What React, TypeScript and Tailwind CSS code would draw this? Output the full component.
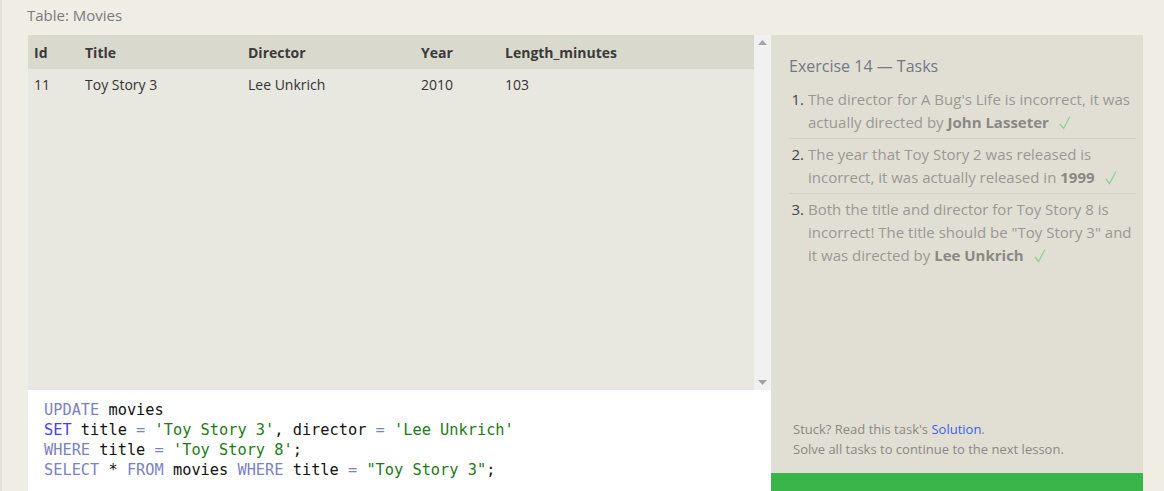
import React from 'react';

const cols = [
  { key: 'Id', w: 'w-[51px]' },
  { key: 'Title', w: 'w-[163px]' },
  { key: 'Director', w: 'w-[173px]' },
  { key: 'Year', w: 'w-[84px]' },
  { key: 'Length_minutes', w: 'w-[150px]' },
];

const row = ['11', 'Toy Story 3', 'Lee Unkrich', '2010', '103'];

function Check() {
  return (
    <svg width="12" height="15" viewBox="0 0 12 15" className="ml-[10px] inline-block align-[-2px]">
      <path d="M1 9 L4.5 13.5 L11 1.5" fill="none" stroke="#8fd09a" strokeWidth="1.3" />
    </svg>
  );
}

export default function App() {
  return (
    <div className="h-[491px] w-[1164px] overflow-hidden border-l-2 border-[#e2e0d8] bg-[#f0ede5] font-['Open_Sans',sans-serif]">
      <div className="pl-[25px] pt-[4px] text-[15px] leading-[22px] text-[#7a7a7a]">Table: Movies</div>
      <div className="mt-[9px] flex pl-[26px]">
        {/* left column: result table + editor */}
        <div className="flex w-[743px] flex-col">
          <div className="flex h-[355px]">
            <div className="flex-1 bg-[#e9e8e0] text-[14px] text-[#333]">
              <div className="flex h-[34px] items-center bg-[#dad9cd] pl-[6px] font-bold text-[#3a3a3a]">
                {cols.map((c) => (
                  <div key={c.key} className={c.w}>
                    {c.key}
                  </div>
                ))}
              </div>
              <div className="flex h-[31px] items-center pl-[6px]">
                {row.map((v, i) => (
                  <div key={i} className={cols[i].w}>
                    {v}
                  </div>
                ))}
              </div>
            </div>
            <div className="flex w-[17px] flex-col items-center justify-between bg-[#f1f1f1] py-[5px]">
              <svg width="9" height="5" viewBox="0 0 9 5">
                <path d="M0 5 L4.5 0 L9 5 Z" fill="#a3a3a3" />
              </svg>
              <svg width="9" height="5" viewBox="0 0 9 5">
                <path d="M0 0 L4.5 5 L9 0 Z" fill="#a3a3a3" />
              </svg>
            </div>
          </div>
          <div className="h-[110px] bg-white pl-[16px] pt-[10px] font-['DejaVu_Sans_Mono',monospace] text-[15.3px] leading-[20px] whitespace-pre text-[#111]">
            <div>
              <span className="text-[#7b82c4]">UPDATE</span> movies
            </div>
            <div>
              <span className="text-[#4a3ff0]">SET</span> title <span className="text-[#7b82c4]">=</span>{' '}
              <span className="text-[#1d7a17]">'Toy Story 3'</span>, director{' '}
              <span className="text-[#7b82c4]">=</span> <span className="text-[#1d7a17]">'Lee Unkrich'</span>
            </div>
            <div>
              <span className="text-[#7b82c4]">WHERE</span> title <span className="text-[#7b82c4]">=</span>{' '}
              <span className="text-[#1d7a17]">'Toy Story 8'</span>;
            </div>
            <div>
              <span className="text-[#7b82c4]">SELECT</span> * <span className="text-[#7b82c4]">FROM</span> movies{' '}
              <span className="text-[#7b82c4]">WHERE</span> title <span className="text-[#7b82c4]">=</span>{' '}
              <span className="text-[#1d7a17]">"Toy Story 3"</span>;
            </div>
          </div>
        </div>

        {/* right column: tasks */}
        <div className="flex h-[456px] w-[372px] flex-col bg-[#e1dfd4]">
          <div className="flex-1 pl-[18px] pr-[7px] pt-[20px]">
            <div className="text-[16px] leading-[22px] text-[#747786]">Exercise 14 — Tasks</div>
            <ol className="mt-[11px] text-[15px] leading-[23px] text-[#9a9893]">
              <li className="flex border-b border-[#d3d1c6] pb-[4px]">
                <span className="w-[15px] text-right text-[#444]">1.</span>
                <span className="ml-[4px] flex-1">
                  The director for A Bug's Life is incorrect, it was actually directed by{' '}
                  <b className="text-[#8a8883]">John Lasseter</b>
                  <Check />
                </span>
              </li>
              <li className="flex border-b border-[#d3d1c6] py-[4px]">
                <span className="w-[15px] text-right text-[#444]">2.</span>
                <span className="ml-[4px] flex-1">
                  The year that Toy Story 2 was released is incorrect, it was actually released in{' '}
                  <b className="text-[#8a8883]">1999</b>
                  <Check />
                </span>
              </li>
              <li className="flex py-[4px]">
                <span className="w-[15px] text-right text-[#444]">3.</span>
                <span className="ml-[4px] flex-1">
                  Both the title and director for Toy Story 8 is incorrect! The title should be "Toy Story 3" and
                  it was directed by <b className="text-[#8a8883]">Lee Unkrich</b>
                  <Check />
                </span>
              </li>
            </ol>
          </div>
          <div className="pb-[14px] pl-[22px] text-[13px] leading-[20px] text-[#8a8883]">
            <div>
              Stuck? Read this task's <span className="text-[#3d5ee8]">Solution</span>.
            </div>
            <div>Solve all tasks to continue to the next lesson.</div>
          </div>
          <div className="h-[18px] bg-[#39b54a]" />
        </div>
      </div>
    </div>
  );
}
